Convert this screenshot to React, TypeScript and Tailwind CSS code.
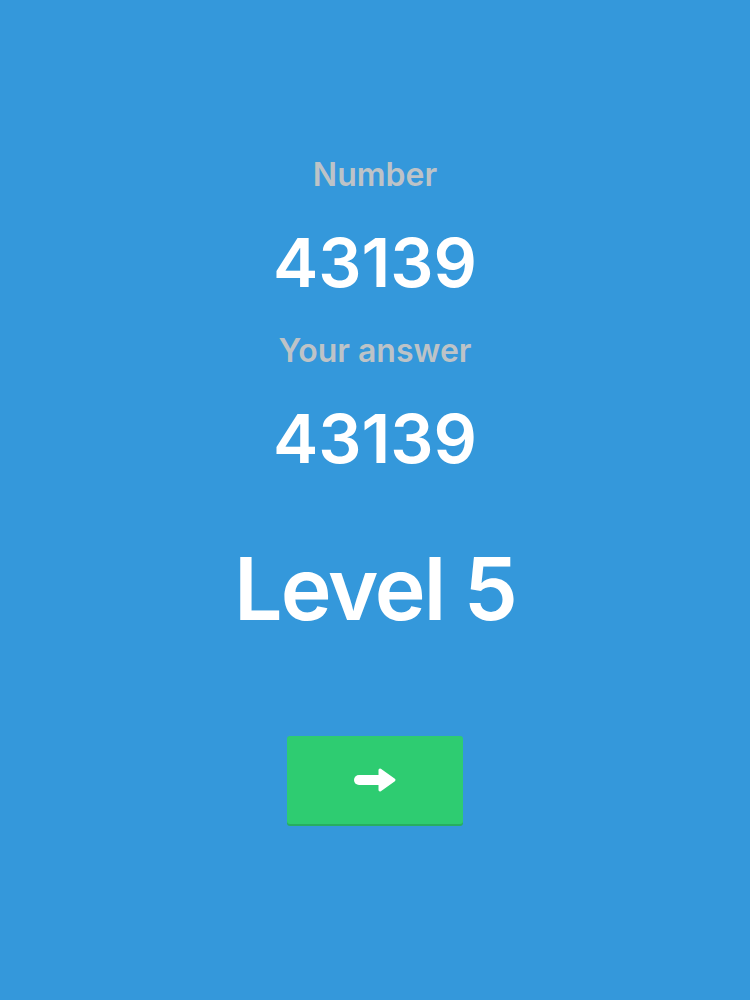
import React from 'react';

const font = { fontFamily: 'Inter, "Noto Sans", sans-serif' };

function ArrowIcon() {
  return (
    <svg width="44" height="26" viewBox="0 0 44 26" fill="none">
      <line x1="6" y1="13" x2="28" y2="13" stroke="white" strokeWidth="10" strokeLinecap="round" />
      <path d="M27 3 L41 13 L27 23 Z" fill="white" stroke="white" strokeWidth="3" strokeLinejoin="round" />
    </svg>
  );
}

export default function App() {
  const number = '43139';
  const answer = '43139';
  const level = 5;

  return (
    <div className="min-h-screen w-full bg-[#3498db] flex flex-col items-center pt-[156px]" style={font}>
      <div className="text-[32px] leading-[38px] font-semibold text-[#bdc3c7]">Number</div>
      <div className="mt-[34px] text-[68px] leading-none font-semibold text-white">{number}</div>
      <div className="mt-[36px] text-[32px] leading-[38px] font-semibold text-[#bdc3c7]">Your answer</div>
      <div className="mt-[34px] text-[68px] leading-none font-semibold text-white">{answer}</div>
      <div className="mt-[74px] text-[86px] leading-none font-semibold tracking-[-2px] text-white">Level {level}</div>
      <button className="mt-[104px] w-[176px] h-[88px] rounded-[3px] bg-[#2ecc71] shadow-[0_2px_0_#27ae60] flex items-center justify-center">
        <ArrowIcon />
      </button>
    </div>
  );
}
